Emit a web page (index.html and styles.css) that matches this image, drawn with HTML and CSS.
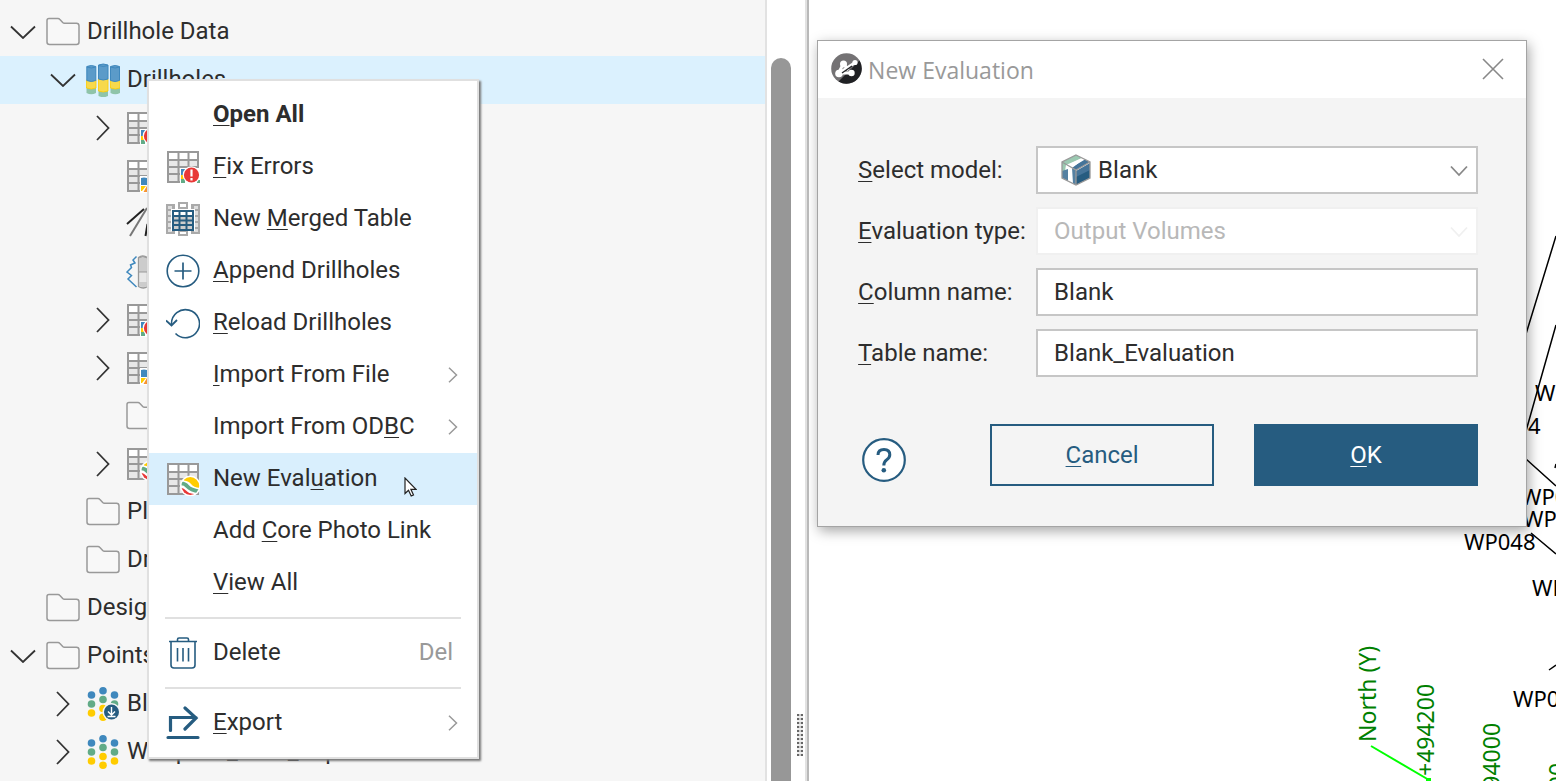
FILE: index.html
```html
<!DOCTYPE html>
<html lang="en">
<head>
<meta charset="utf-8">
<title>New Evaluation</title>
<link rel="stylesheet" href="styles.css">
</head>
<body>
<svg class="sprite" aria-hidden="true">
  <symbol id="down" viewBox="0 0 26 14"><path d="M1 1.500l12 11.500 12-11.500" fill="none" stroke="#333" stroke-width="1.800"/></symbol>
  <symbol id="right" viewBox="0 0 14 26"><path d="M1 1l11.500 12-11.500 12" fill="none" stroke="#333" stroke-width="1.800"/></symbol>
  <symbol id="next" viewBox="0 0 10 16"><path d="M1 .7L8.500 8 1 15.300" fill="none" stroke="#999" stroke-width="1.500"/></symbol>
  <symbol id="drop" viewBox="0 0 18 12"><path d="M1 1.500l8 8.500 8-8.500" fill="none" stroke="currentColor" stroke-width="1.800"/></symbol>
  <symbol id="folder" viewBox="0 0 34 34"><path d="M1 5.500q0-2 2-2h9q1 0 1.700.8l3 3.200q.7.700 1.700.7h12q2.600 0 2.600 2.600v16.200q0 2.500-2.500 2.500H3.500Q1 29.500 1 27z" fill="#f8f8f8" stroke="#999" stroke-width="1.500"/></symbol>
  <symbol id="grid" viewBox="0 0 34 34">
    <path d="M1 1h32v32H1z" fill="#999"/>
    <path d="M3 3h8.500v6H3zM13.500 3h8v6h-8zM23.500 3h7.500v6h-7.500z" fill="#fff"/>
    <path d="M3 11h8.500v5H3zM13.500 11h8v5h-8zM23.500 11h7.500v5h-7.500zM3 18h8.500v5H3zM13.500 18h8v5h-8zM23.500 18h7.500v5h-7.500zM3 25h8.500v6H3zM13.500 25h8v6h-8zM23.500 25h7.500v6h-7.500z" fill="#e8e8e8"/>
  </symbol>
  <symbol id="grid-error" viewBox="0 0 34 34">
    <use href="#grid"/>
    <path d="M14 18h20v16H14z" fill="#fff"/>
    <path d="M15 19h4v6h-4z" fill="#3f88bd"/><path d="M15 25h4v5h-4z" fill="#fc0"/><path d="M15 29h4v4h-4zM31 30h3v3h-3z" fill="#62ab87"/>
    <circle cx="25.500" cy="25" r="8.800" fill="#fff"/><circle cx="25.500" cy="25" r="7.600" fill="#e83837"/>
    <path d="M25.500 19.500v7M25.500 28v2.500" stroke="#fff" stroke-width="2.200"/>
  </symbol>
  <symbol id="grid-interval" viewBox="0 0 34 34">
    <use href="#grid"/>
    <path d="M14 17h20v17H14z" fill="#fff"/>
    <path d="M15 19q3-1 6 0v7h-6z" fill="#3f88bd"/><path d="M15 27h5l-4 5h-1z" fill="#fc0"/><path d="M17.500 33l4-7 4 7z" fill="#f79433"/>
  </symbol>
  <clipPath id="ball"><circle cx="24.300" cy="24" r="8.900"/></clipPath>
  <symbol id="grid-eval" viewBox="0 0 34 34">
    <use href="#grid"/>
    <circle cx="24.300" cy="24" r="10.400" fill="#fff"/>
    <g clip-path="url(#ball)">
      <path d="M18 14h16v12q-6.500-.5-9-4-2-3-7-3.500z" fill="#fc0"/>
      <path d="M14 21.500q4.500-.5 7.500 3t12 5" fill="none" stroke="#62ab87" stroke-width="3.800"/>
      <path d="M13 25.500q4.500 0 7 3t8 3.500v4H13z" fill="#e83837"/>
    </g>
  </symbol>
  <symbol id="drill" viewBox="0 0 34 34">
    <path d="M.5 24h9.500v6q-4.700 2.500-9.500 0zM24.500 24h9.500v6q-4.700 2.500-9.500 0z" fill="#8fc4a9"/>
    <path d="M12.500 27h9.500v6q-4.700 2.500-9.500 0z" fill="#8fc4a9"/>
    <path d="M.5 17h9.500v8q-4.700 2-9.500 0zM24.500 17h9.500v8q-4.700 2-9.500 0z" fill="#f7d94c" stroke="#fc0" stroke-width=".8"/>
    <path d="M12.500 16h9.500v12q-4.700 2-9.500 0z" fill="#f7d94c" stroke="#fc0" stroke-width=".8"/>
    <path d="M.8 3.500q4.400-2 9 0v14q-4.600 2-9 0zM24.500 3.500q4.700-2 9 0v14q-4.300 2-9 0zM12.500 2q4.700-2 9.500 0v14q-4.700 2-9.500 0z" fill="#5b9bc9" stroke="#3f88bd"/>
    <path d="M.8 4q4.400 2 9 0M24.500 4q4.700 2 9 0M12.500 2.500q4.700 2 9.500 0" fill="none" stroke="#3f88bd"/>
  </symbol>
  <symbol id="trace" viewBox="0 0 34 34"><path d="M1 17L18 2" stroke="#222" stroke-width="2"/><path d="M4 29L21 1" stroke="#777" stroke-width="2"/><path d="M19.500 29l2-12" stroke="#222" stroke-width="2"/></symbol>
  <symbol id="desurvey" viewBox="0 0 34 34">
    <path d="M10.500 1.500L7 5l2 3-4.500 2 1 2.500L1 17l4.500 3.500L2 24l8.500 8" fill="none" stroke="#3f88bd" stroke-width="1.500"/>
    <path d="M12.500 2.500q4-3 9 0v29q-4 3-9 0z" fill="#e8e8e8" stroke="#999" stroke-width="1.300"/><path d="M12.500 3q4-3 9 0v14h-9z" fill="#ccc" stroke="#999"/><path d="M13 27h9v4q-4 2-9 0z" fill="#ccc"/>
  </symbol>
  <symbol id="points" viewBox="0 0 34 34">
    <g fill="#3f88bd"><circle cx="5.500" cy="8" r="3.800"/><circle cx="17" cy="3.800" r="3.800"/><circle cx="28.500" cy="8" r="3.800"/></g>
    <g fill="#62ab87"><circle cx="5.500" cy="17" r="3.800"/><circle cx="17" cy="12.500" r="3.800"/><circle cx="28.500" cy="17" r="3.800"/></g>
    <g fill="#fc0"><circle cx="5.500" cy="26" r="3.800"/><circle cx="17" cy="21.500" r="3.800"/><circle cx="28.500" cy="26" r="3.800"/><circle cx="17" cy="30.200" r="3.800"/></g>
  </symbol>
  <symbol id="points-in" viewBox="0 0 34 34">
    <use href="#points"/>
    <circle cx="25.500" cy="25" r="9" fill="#f6f6f6"/><circle cx="25.500" cy="25" r="7.500" fill="#265c80"/>
    <path d="M25.500 20v7.500m-3.500-3l3.500 3.500 3.500-3.500M21.500 29.500h8" fill="none" stroke="#fff" stroke-width="1.400"/>
  </symbol>
  <symbol id="merge" viewBox="0 0 34 34">
    <path d="M0 2h9v30H0zM25 2h9v30h-9z" fill="#aaa"/>
    <path d="M2 4h4v3H2zM28 4h4v3h-4zM2 9h3v4H2zM29 9h3v4h-3zM2 15h3v4H2zM29 15h3v4h-3zM2 21h3v4H2zM29 21h3v4h-3zM2 27h4v3H2zM28 27h4v3h-4z" fill="#ddd"/>
    <path d="M5 7h24v22H5z" fill="#fff"/>
    <path d="M13 1h8v5h-8zM13 29h8v4h-8z" fill="#fff" stroke="#aaa" stroke-width="2"/>
    <path d="M6 8h22v21H6z" fill="#265c80"/>
    <path d="M8 10h4.500v3H8zM14.500 10h5v3h-5zM21.500 10h4.500v3h-4.500z" fill="#fff"/>
    <path d="M8 15h4.500v2.500H8zM14.500 15h5v2.500h-5zM21.500 15h4.500v2.500h-4.500zM8 19.500h4.500v2.500H8zM14.500 19.500h5v2.500h-5zM21.500 19.500h4.500v2.500h-4.500zM8 24h4.500v3H8zM14.500 24h5v3h-5zM21.500 24h4.500v3h-4.500z" fill="#ccc"/>
  </symbol>
  <symbol id="plus" viewBox="0 0 34 34"><circle cx="17" cy="17" r="15.800" fill="#fff" stroke="#265c80" stroke-width="1.600"/><path d="M8.500 17h17M17 8.500v17" stroke="#265c80" stroke-width="1.700"/></symbol>
  <symbol id="reload" viewBox="0 0 34 34"><path d="M5.500 18A14 14 0 1 1 9.500 27.500" fill="none" stroke="#265c80" stroke-width="1.600"/><path d="M0 14.500l5.500 5 5.500-5.500" fill="none" stroke="#265c80" stroke-width="1.800"/></symbol>
  <symbol id="trash" viewBox="0 0 34 34"><path d="M5 5.500h24v23.500q0 3-3 3H8q-3 0-3-3zM3 5.500h28M11.500 5V3.500q0-1.500 1.500-1.500h8q1.500 0 1.500 1.500V5M11.500 12v13.500M17 12v13.500M22.500 12v13.500" fill="none" stroke="#265c80" stroke-width="1.600"/></symbol>
  <symbol id="export" viewBox="0 0 34 34"><path d="M4.500 24.500v-13H30M19 2l11 10-11 11M2 31.500h30" fill="none" stroke="#265c80" stroke-width="3.200" stroke-linecap="round"/></symbol>
  <symbol id="cube" viewBox="0 0 32 32">
    <path d="M16 1l14 7v16l-14 7-14-7V8z" fill="#fff"/>
    <path d="M16 1l6 3L6 11l-1 6-3 1V8z" fill="#9bc9b1"/><path d="M24 5l6 3-14 8-4-2z" fill="#457499"/><path d="M22 4l3 1.500L12 13l-4-2z" fill="#fff"/>
    <path d="M2 17l6-2v12l-6-3zM12 14l4 2v15l-3-1.500z" fill="#5581a2"/>
    <path d="M16 17l14-8v15l-14 7z" fill="#457499"/><path d="M16 23l14-7v8l-14 7z" fill="#265c80"/>
    <path d="M16 1l14 7v16l-14 7-14-7V8zM2 8l14 8 14-8M16 16v15" fill="none" stroke="#999" stroke-width="1.300"/>
  </symbol>
</svg>

<main class="app">
  <section class="browser">
    <div class="tree">
      <div class="row d0"><span class="slot"><svg class="down"><use href="#down"/></svg></span><svg class="icon"><use href="#folder"/></svg><span>Drillhole Data</span></div>
      <div class="row d1 selected"><span class="slot"><svg class="down"><use href="#down"/></svg></span><svg class="icon"><use href="#drill"/></svg><span>Drillholes</span></div>
      <div class="row d2"><span class="slot"><svg class="right"><use href="#right"/></svg></span><svg class="icon"><use href="#grid-error"/></svg></div>
      <div class="row d2"><span class="slot"></span><svg class="icon"><use href="#grid-interval"/></svg></div>
      <div class="row d2"><span class="slot"></span><svg class="icon"><use href="#trace"/></svg></div>
      <div class="row d2"><span class="slot"></span><svg class="icon"><use href="#desurvey"/></svg></div>
      <div class="row d2"><span class="slot"><svg class="right"><use href="#right"/></svg></span><svg class="icon"><use href="#grid-error"/></svg></div>
      <div class="row d2"><span class="slot"><svg class="right"><use href="#right"/></svg></span><svg class="icon"><use href="#grid-interval"/></svg></div>
      <div class="row d2"><span class="slot"></span><svg class="icon"><use href="#folder"/></svg></div>
      <div class="row d2"><span class="slot"><svg class="right"><use href="#right"/></svg></span><svg class="icon"><use href="#grid-eval"/></svg></div>
      <div class="row d1"><span class="slot"></span><svg class="icon"><use href="#folder"/></svg><span>Planned</span></div>
      <div class="row d1"><span class="slot"></span><svg class="icon"><use href="#folder"/></svg><span>Drillhole</span></div>
      <div class="row d0"><span class="slot"></span><svg class="icon"><use href="#folder"/></svg><span>Designs</span></div>
      <div class="row d0"><span class="slot"><svg class="down"><use href="#down"/></svg></span><svg class="icon"><use href="#folder"/></svg><span>Points</span></div>
      <div class="row d1"><span class="slot"><svg class="right"><use href="#right"/></svg></span><svg class="icon"><use href="#points-in"/></svg><span>Blank</span></div>
      <div class="row d1"><span class="slot"><svg class="right"><use href="#right"/></svg></span><svg class="icon"><use href="#points"/></svg><span>Wolfpass_Data_Topo</span></div>
    </div>
    <div class="scrollbar"><div class="thumb"></div></div>
    <div class="grip"></div>

    <div class="menu" role="menu">
      <button class="item strong" role="menuitem"><span class="icon"></span><span><u>O</u>pen All</span></button>
      <button class="item" role="menuitem"><svg class="icon"><use href="#grid-error"/></svg><span><u>F</u>ix Errors</span></button>
      <button class="item" role="menuitem"><svg class="icon"><use href="#merge"/></svg><span>New <u>M</u>erged Table</span></button>
      <button class="item" role="menuitem"><svg class="icon"><use href="#plus"/></svg><span><u>A</u>ppend Drillholes</span></button>
      <button class="item" role="menuitem"><svg class="icon"><use href="#reload"/></svg><span><u>R</u>eload Drillholes</span></button>
      <button class="item" role="menuitem"><span class="icon"></span><span><u>I</u>mport From File</span><svg class="next"><use href="#next"/></svg></button>
      <button class="item" role="menuitem"><span class="icon"></span><span>Import From OD<u>B</u>C</span><svg class="next"><use href="#next"/></svg></button>
      <button class="item active" role="menuitem"><svg class="icon"><use href="#grid-eval"/></svg><span>New Eval<u>u</u>ation</span></button>
      <button class="item" role="menuitem"><span class="icon"></span><span>Add <u>C</u>ore Photo Link</span></button>
      <button class="item" role="menuitem"><span class="icon"></span><span><u>V</u>iew All</span></button>
      <hr>
      <button class="item" role="menuitem"><svg class="icon"><use href="#trash"/></svg><span>Delete</span><span class="shortcut">Del</span></button>
      <hr>
      <button class="item" role="menuitem"><svg class="icon"><use href="#export"/></svg><span><u>E</u>xport</span><svg class="next"><use href="#next"/></svg></button>
      <svg class="cursor" viewBox="0 0 13 20"><path d="M1 1v15.500l3.500-3.300 2.700 5.800 2.300-1-2.600-5.700H12z" fill="#fff" stroke="#222" stroke-width="1.200"/></svg>
    </div>
  </section>

  <section class="scene">
    <svg class="plot" viewBox="0 0 747 781" preserveAspectRatio="xMinYMin slice">
      <g stroke="#000" stroke-width="1.500" fill="none">
        <path d="M747 236L717 334M747 325L717 431M717 459l30 27M722 533l25 21"/>
        <path d="M740 670l7-5"/><path d="M746 468l1-4"/>
      </g>
      <path d="M562 746l58 34" stroke="#0f0" stroke-width="2"/><path d="M617 778h5v5h-5z" fill="#0f0"/>
      <g class="hole">
        <text x="726" y="401">WP0</text><text x="719" y="434">4</text>
        <text x="712" y="505">WP0</text><text x="714" y="527">WP0</text>
        <text x="655" y="550">WP048</text><text x="723" y="596">WP0</text><text x="704" y="707">WP0</text>
      </g>
      <g class="axis">
        <text transform="translate(567 742) rotate(-90)">North (Y)</text>
        <text transform="translate(625 776) rotate(-90)">+494200</text>
        <text transform="translate(691 815) rotate(-90)">+494000</text>
        <text transform="translate(757 855) rotate(-90)">+493800</text>
      </g>
    </svg>

    <form class="dialog" role="dialog" aria-labelledby="dialog-title">
      <header class="titlebar">
        <svg class="logo" viewBox="0 0 31 31">
          <circle cx="15.500" cy="15.500" r="15.300" fill="#747274"/><path d="M28.500 7.500A15.300 15.300 0 0 1 7.500 28.500z" fill="#202124"/>
          <path d="M7.500 20.500L25 9M12.500 10.500L7.500 20M9 20h11M12.500 11l5 6" stroke="#fff" stroke-width="2.800"/>
          <g fill="#fff"><circle cx="12.500" cy="11" r="3.500"/><circle cx="8" cy="20.500" r="3.800"/><circle cx="20.500" cy="20" r="3.200"/><circle cx="24" cy="9.500" r="2.600"/></g>
          <path d="M11 20l10-7" stroke="#202124" stroke-width="1.300"/>
        </svg>
        <h1 id="dialog-title">New Evaluation</h1>
        <button type="button" class="close" aria-label="Close"><svg viewBox="0 0 22 22"><path d="M1 1l20 20M21 1L1 21" stroke="#888" stroke-width="1.600"/></svg></button>
      </header>
      <div class="content">
        <div class="fields">
          <label for="model"><u>S</u>elect model:</label>
          <div class="field with-icon"><select id="model"><option>Blank</option></select><svg class="cube"><use href="#cube"/></svg><svg class="drop"><use href="#drop"/></svg></div>
          <label for="type"><u>E</u>valuation type:</label>
          <div class="field off"><select id="type" disabled><option>Output Volumes</option></select><svg class="drop"><use href="#drop"/></svg></div>
          <label for="column"><u>C</u>olumn name:</label>
          <div class="field"><input id="column" type="text" value="Blank"></div>
          <label for="table"><u>T</u>able name:</label>
          <div class="field"><input id="table" type="text" value="Blank_Evaluation"></div>
        </div>
        <div class="actions">
          <button type="button" class="help" aria-label="Help"><svg viewBox="0 0 44 44"><circle cx="22" cy="22" r="20.800" fill="#fff" stroke="#265c80" stroke-width="2.200"/><path d="M16 17q0-5.500 6-5.500 5.800 0 5.800 5.300 0 3-3.300 5.200-2.700 2-2.700 5.500" fill="none" stroke="#265c80" stroke-width="3"/><circle cx="21.800" cy="32.300" r="2.300" fill="#265c80"/></svg></button>
          <button type="button" class="action"><span><u>C</u>ancel</span></button>
          <button type="submit" class="action primary"><span><u>O</u>K</span></button>
        </div>
      </div>
    </form>
  </section>
</main>
</body>
</html>
```

FILE: styles.css
```css
* { box-sizing: border-box; }
body { margin: 0; font: 24px/32px Roboto, "Liberation Sans", sans-serif; color: #2d2d2d; background: #fff; overflow: hidden; }
button, input, select { font: inherit; color: inherit; margin: 0; }
button { cursor: default; }
u { text-decoration: underline; text-decoration-thickness: 1px; text-underline-offset: 3px; text-decoration-skip-ink: none; }
svg { display: block; flex: none; }
.sprite { position: absolute; width: 0; height: 0; }

.app { display: grid; grid-template-columns: 52% 1fr; height: 100vh; }

.browser { position: relative; display: flex; min-width: 0; height: 100vh; border-right: 2px solid #b9b9b9; }
.tree { flex: 1; min-width: 0; padding-top: 8px; overflow: hidden; background: #f6f6f6; border-right: 2px solid #e2e2e2; }
.row { display: flex; align-items: center; height: 48px; padding: 0 8px 0 10px; white-space: nowrap; }
.row > span:last-child { padding-bottom: 2px; }
.row.d1 { padding-left: 50px; }
.row.d2 { padding-left: 90px; }
.row.selected { background: #dbf1fe; }
.slot { display: flex; justify-content: center; width: 26px; margin-right: 10px; }
.down { width: 26px; height: 14px; }
.right { width: 14px; height: 26px; }
.icon { flex: none; width: 34px; height: 34px; }
.row .icon { margin-right: 7px; }

.scrollbar { width: 40px; padding: 58px 0 0 4px; background: #fff; border-right: 2px solid #e2e2e2; overflow: hidden; }
.thumb { width: 20px; height: 100%; border-radius: 10px 10px 0 0; background: #979797; }
.grip { position: absolute; right: 4px; bottom: 25px; width: 6px; height: 42px; background: repeating-linear-gradient(#fff0 0 2px, #eee 2px 4px), linear-gradient(90deg, #666 0 2px, #ccc 2px 4px, #666 4px 6px); }

.menu { position: absolute; left: 147px; top: 79px; width: 332px; padding: 8px 0; background: #fff; border: 2px solid #e0e0e0; box-shadow: 2px 2px 2px #777; }
.item { display: flex; align-items: center; gap: 13px; width: 100%; height: 52px; padding: 0 19px 0 17px; border: 0; background: transparent; text-align: left; white-space: nowrap; }
.item > span { padding-bottom: 2px; }
.item.strong { font-weight: 700; }
.item.active { background: #d9effd; }
.next { width: 10px; height: 16px; margin-left: auto; }
.shortcut { margin: 0 5px 0 auto; color: #999; }
.menu hr { height: 2px; margin: 8px 16px; border: 0; background: #e0e0e0; }
.cursor { position: absolute; left: 255px; top: 396px; width: 13px; height: 20px; }

.scene { position: relative; min-width: 0; overflow: hidden; }
.plot { width: 100%; height: 100%; }
.plot text { font: 22px "Noto Sans", "Open Sans", sans-serif; }
.plot .axis text { font-size: 23px; }
.axis { fill: #008000; }

.dialog { position: absolute; left: 8px; top: 40px; width: 710px; background: #f4f4f4; border: 1px solid #a4a4a4; box-shadow: 2px 4px 12px rgba(0, 0, 0, .35); }
.titlebar { display: flex; align-items: center; height: 57px; padding: 0 22px 2px 13px; background: #fff; }
.logo { width: 31px; height: 31px; }
.titlebar h1 { margin: 0 auto 0 6px; padding-top: 3px; font: 23px/32px "Open Sans", "Noto Sans", sans-serif; color: #999; }
.close { padding: 0; border: 0; background: transparent; }
.close svg { width: 22px; height: 22px; }
.content { padding: 48px 48px 40px 40px; }
.fields { display: grid; grid-template-columns: 178px 1fr; row-gap: 13px; align-items: center; }
.fields label { white-space: nowrap; }
.field { position: relative; }
.field input, .field select { display: block; width: 100%; height: 48px; padding: 0 16px; border: 2px solid #c6c6c6; border-radius: 0; outline: 0; background: #fff; appearance: none; opacity: 1; }
.field.with-icon select { padding-left: 60px; }
.field.off select { border-color: #f0f0f0; color: #b8b8b8; }
.cube { position: absolute; left: 24px; top: 8px; width: 32px; height: 32px; pointer-events: none; }
.drop { position: absolute; right: 10px; top: 19px; width: 18px; height: 12px; color: #888; pointer-events: none; }
.off .drop { color: #f0f0f0; }
.actions { display: flex; align-items: center; gap: 40px; margin-top: 47px; }
.help { margin: 10px auto 0 4px; padding: 0; border: 0; background: transparent; }
.help svg { width: 44px; height: 44px; }
.action { width: 224px; height: 62px; border: 2px solid #265c80; background: #f4f4f4; color: #265c80; }
.action.primary { background: #265c80; color: #fff; }
```
